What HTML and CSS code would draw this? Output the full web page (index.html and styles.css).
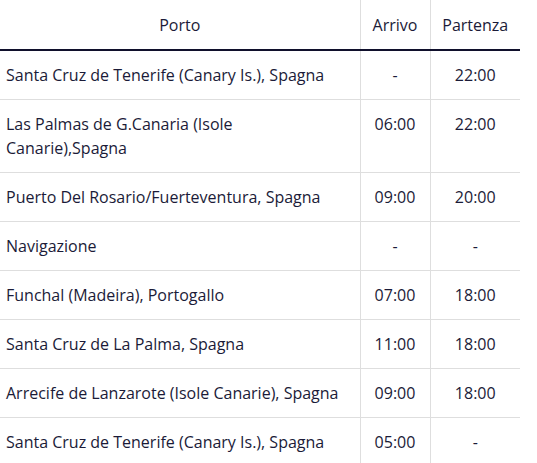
FILE: index.html
```html
<!DOCTYPE html>
<html lang="it">
<head>
<meta charset="utf-8">
<link rel="stylesheet" href="styles.css">
</head>
<body>
<table class="itinerary">
  <thead>
    <tr>
      <th class="col-port">Porto</th>
      <th class="col-arr">Arrivo</th>
      <th class="col-dep">Partenza</th>
    </tr>
  </thead>
  <tbody>
    <tr><td>Santa Cruz de Tenerife (Canary Is.), Spagna</td><td class="t">-</td><td class="t">22:00</td></tr>
    <tr><td>Las Palmas de G.Canaria (Isole<br>Canarie),Spagna</td><td class="t">06:00</td><td class="t">22:00</td></tr>
    <tr><td>Puerto Del Rosario/Fuerteventura, Spagna</td><td class="t">09:00</td><td class="t">20:00</td></tr>
    <tr><td>Navigazione</td><td class="t">-</td><td class="t">-</td></tr>
    <tr><td>Funchal (Madeira), Portogallo</td><td class="t">07:00</td><td class="t">18:00</td></tr>
    <tr><td>Santa Cruz de La Palma, Spagna</td><td class="t">11:00</td><td class="t">18:00</td></tr>
    <tr><td>Arrecife de Lanzarote (Isole Canarie), Spagna</td><td class="t">09:00</td><td class="t">18:00</td></tr>
    <tr><td>Santa Cruz de Tenerife (Canary Is.), Spagna</td><td class="t">05:00</td><td class="t">-</td></tr>
  </tbody>
</table>
</body>
</html>
```
FILE: styles.css
```css
html, body {
  margin: 0;
  padding: 0;
  background: #ffffff;
}
body {
  font-family: "Open Sans", "Liberation Sans", sans-serif;
  font-size: 16px;
  color: #1b1b38;
}
.itinerary {
  border-collapse: collapse;
  width: 520px;
  table-layout: fixed;
}
.itinerary th,
.itinerary td {
  box-sizing: border-box;
}
.col-port { width: 360px; }
.col-arr { width: 70px; }
.col-dep { width: 90px; }
.itinerary th {
  font-weight: normal;
  height: 50px;
  padding: 0 6px;
  line-height: 24px;
  text-align: center;
  border-bottom: 2px solid #10102c;
  vertical-align: middle;
}
.itinerary td {
  padding: 12px 6px;
  line-height: 24px;
  border-bottom: 1px solid #dedede;
  text-align: left;
  vertical-align: top;
}
.itinerary th + th,
.itinerary td + td {
  border-left: 1px solid #dedede;
}
.itinerary td.t {
  text-align: center;
}
```
